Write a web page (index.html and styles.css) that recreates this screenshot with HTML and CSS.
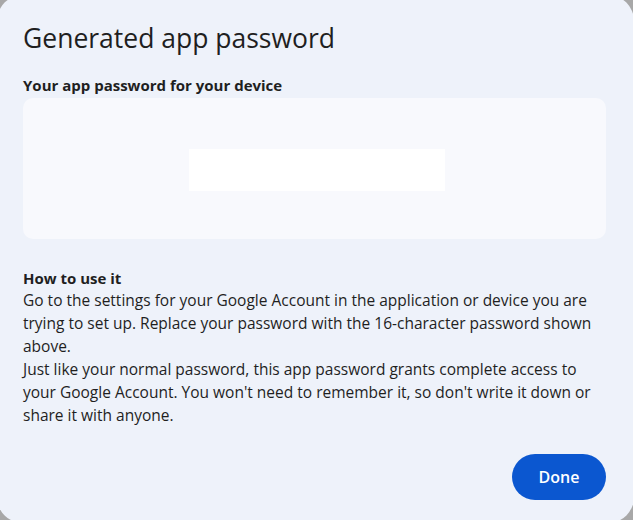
FILE: index.html
```html
<!DOCTYPE html>
<html lang="en">
<head>
<meta charset="utf-8">
<title>Generated app password</title>
<link rel="stylesheet" href="styles.css">
</head>
<body>
<div class="dialog">
  <h1 class="title">Generated app password</h1>
  <h2 class="subtitle">Your app password for your device</h2>
  <div class="card">
    <div class="password"></div>
  </div>
  <div class="howto">
    <h3 class="howto-title">How to use it</h3>
    <p class="howto-text">Go to the settings for your Google Account in the application or device you are trying to set up. Replace your password with the 16-character password shown above.</p>
    <p class="howto-text">Just like your normal password, this app password grants complete access to your Google Account. You won't need to remember it, so don't write it down or share it with anyone.</p>
  </div>
  <div class="actions">
    <button class="done">Done</button>
  </div>
</div>
</body>
</html>
```

FILE: styles.css
```css
html, body {
  margin: 0;
  padding: 0;
  overflow: hidden;
  background: #a8a8a8;
  height: 520px;
}

.dialog {
  margin: -5px 0 0 -3px;
  width: 637px;
  height: 528px;
  box-sizing: border-box;
  padding: 25px 28px 23px 26px;
  background: #eef2fa;
  border-radius: 26px;
  color: #1f1f1f;
  font-family: "Open Sans", sans-serif;
  display: flex;
  flex-direction: column;
}

.title {
  margin: 0;
  font-size: 26.5px;
  font-weight: 400;
  line-height: 36px;
  color: #1f1f1f;
}

.subtitle {
  margin: 19px 0 0;
  font-size: 15px;
  font-weight: 700;
  line-height: 20px;
  color: #1f1f1f;
}

.card {
  margin-top: 3px;
  height: 141px;
  background: #f8f9fd;
  border-radius: 10px;
  display: flex;
  align-items: center;
  justify-content: center;
}

.password {
  width: 256px;
  height: 42px;
  background: #ffffff;
  margin-left: 5px;
  margin-top: 2px;
}

.howto {
  margin-top: 28px;
}

.howto-title {
  margin: 0;
  font-size: 15px;
  font-weight: 700;
  line-height: 22px;
}

.howto-text {
  margin: 0;
  font-size: 15.5px;
  line-height: 23px;
}

.actions {
  margin-top: auto;
  display: flex;
  justify-content: flex-end;
}

.done {
  width: 94px;
  height: 46px;
  border: none;
  border-radius: 23px;
  background: #0b57d0;
  color: #ffffff;
  font-family: "Open Sans", sans-serif;
  font-size: 16px;
  font-weight: 600;
  padding: 0;
}
```
